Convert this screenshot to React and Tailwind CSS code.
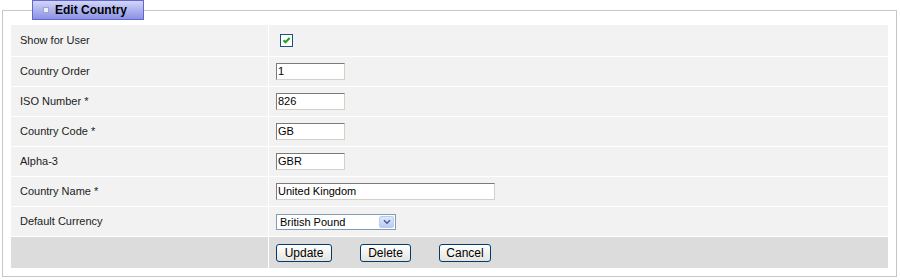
const ROWS = [
  { label: 'Show for User', type: 'check' },
  { label: 'Country Order', type: 'text', value: '1', w: 'w-[69px]' },
  { label: 'ISO Number *', type: 'text', value: '826', w: 'w-[69px]' },
  { label: 'Country Code *', type: 'text', value: 'GB', w: 'w-[69px]' },
  { label: 'Alpha-3', type: 'text', value: 'GBR', w: 'w-[69px]' },
  { label: 'Country Name *', type: 'text', value: 'United Kingdom', w: 'w-[219px]' },
  { label: 'Default Currency', type: 'select', value: 'British Pound' },
]

function TextBox({ value, w }) {
  return (
    <div
      className={`${w} h-[17px] bg-white border border-t-[#7b7b7b] border-l-[#7b7b7b] border-r-[#d4d0c8] border-b-[#d4d0c8] px-[1px] text-[11px] leading-[15px] text-black`}
    >
      {value}
    </div>
  )
}

function CheckBox() {
  return (
    <div className="ml-[4px] w-[13px] h-[13px] border border-[#1c5180] bg-white flex items-center justify-center">
      <svg width="9" height="9" viewBox="0 0 9 9">
        <path d="M1.5 4.2 L3.5 6.3 L7.6 2" fill="none" stroke="#21a121" strokeWidth="2" />
      </svg>
    </div>
  )
}

function Select({ value }) {
  return (
    <div className="w-[120px] h-[16px] bg-white border border-[#7f9db9] flex items-stretch text-[11px] text-black">
      <div className="flex-1 pl-[3px] leading-[14px]">{value}</div>
      <div className="w-[15px] m-[1px] bg-gradient-to-b from-[#dfe8fc] to-[#b8cbf5] border border-[#bccdf3] rounded-[2px] flex items-center justify-center">
        <svg width="8" height="6" viewBox="0 0 8 6">
          <path d="M1 1.2 L4 4.2 L7 1.2" fill="none" stroke="#4d6185" strokeWidth="1.6" />
        </svg>
      </div>
    </div>
  )
}

function Button({ children, w }) {
  return (
    <button
      className={`${w} h-[18px] rounded-[3px] border border-[#003c74] bg-gradient-to-b from-white to-[#e6e4dc] text-[12px] leading-[14px] text-black`}
      style={{ fontFamily: '"Liberation Sans", Arial, sans-serif' }}
    >
      {children}
    </button>
  )
}

export default function App() {
  return (
    <div className="w-[900px] h-[280px] bg-white" style={{ fontFamily: '"Liberation Sans", Arial, sans-serif' }}>
      <fieldset className="ml-[2px] w-[895px] border border-[#c6c6c6] px-[8px] pb-[8px]">
        <legend className="ml-[21px] w-[112px] h-[20px] border border-[#6267c9] bg-gradient-to-b from-[#d2d5f8] to-[#8b91e4] flex items-center">
          <span className="ml-[10px] w-[6px] h-[6px] bg-[#eceefc] border border-[#9ea2dc]" />
          <span className="ml-[6px] text-[12px] font-bold text-black leading-none">Edit Country</span>
        </legend>

        <div className="mt-[5px] grid grid-cols-[257px_1fr] gap-px bg-white">
          {ROWS.map((row, i) => (
            <div key={row.label} className="contents">
              <div className={`${i === 0 ? 'h-[31px]' : 'h-[29px]'} bg-[#f2f2f2] pl-[9px] flex items-center text-[11px] text-[#222]`}>
                {row.label}
              </div>
              <div className="bg-[#f2f2f2] pl-[7px] flex items-center">
                {row.type === 'check' && <CheckBox />}
                {row.type === 'text' && <TextBox value={row.value} w={row.w} />}
                {row.type === 'select' && <Select value={row.value} />}
              </div>
            </div>
          ))}
          <div className="h-[31px] bg-[#dcdcdc]" />
          <div className="bg-[#dcdcdc] pl-[7px] flex items-center gap-[28px]">
            <Button w="w-[56px]">Update</Button>
            <Button w="w-[51px]">Delete</Button>
            <Button w="w-[52px]">Cancel</Button>
          </div>
        </div>
      </fieldset>
    </div>
  )
}
